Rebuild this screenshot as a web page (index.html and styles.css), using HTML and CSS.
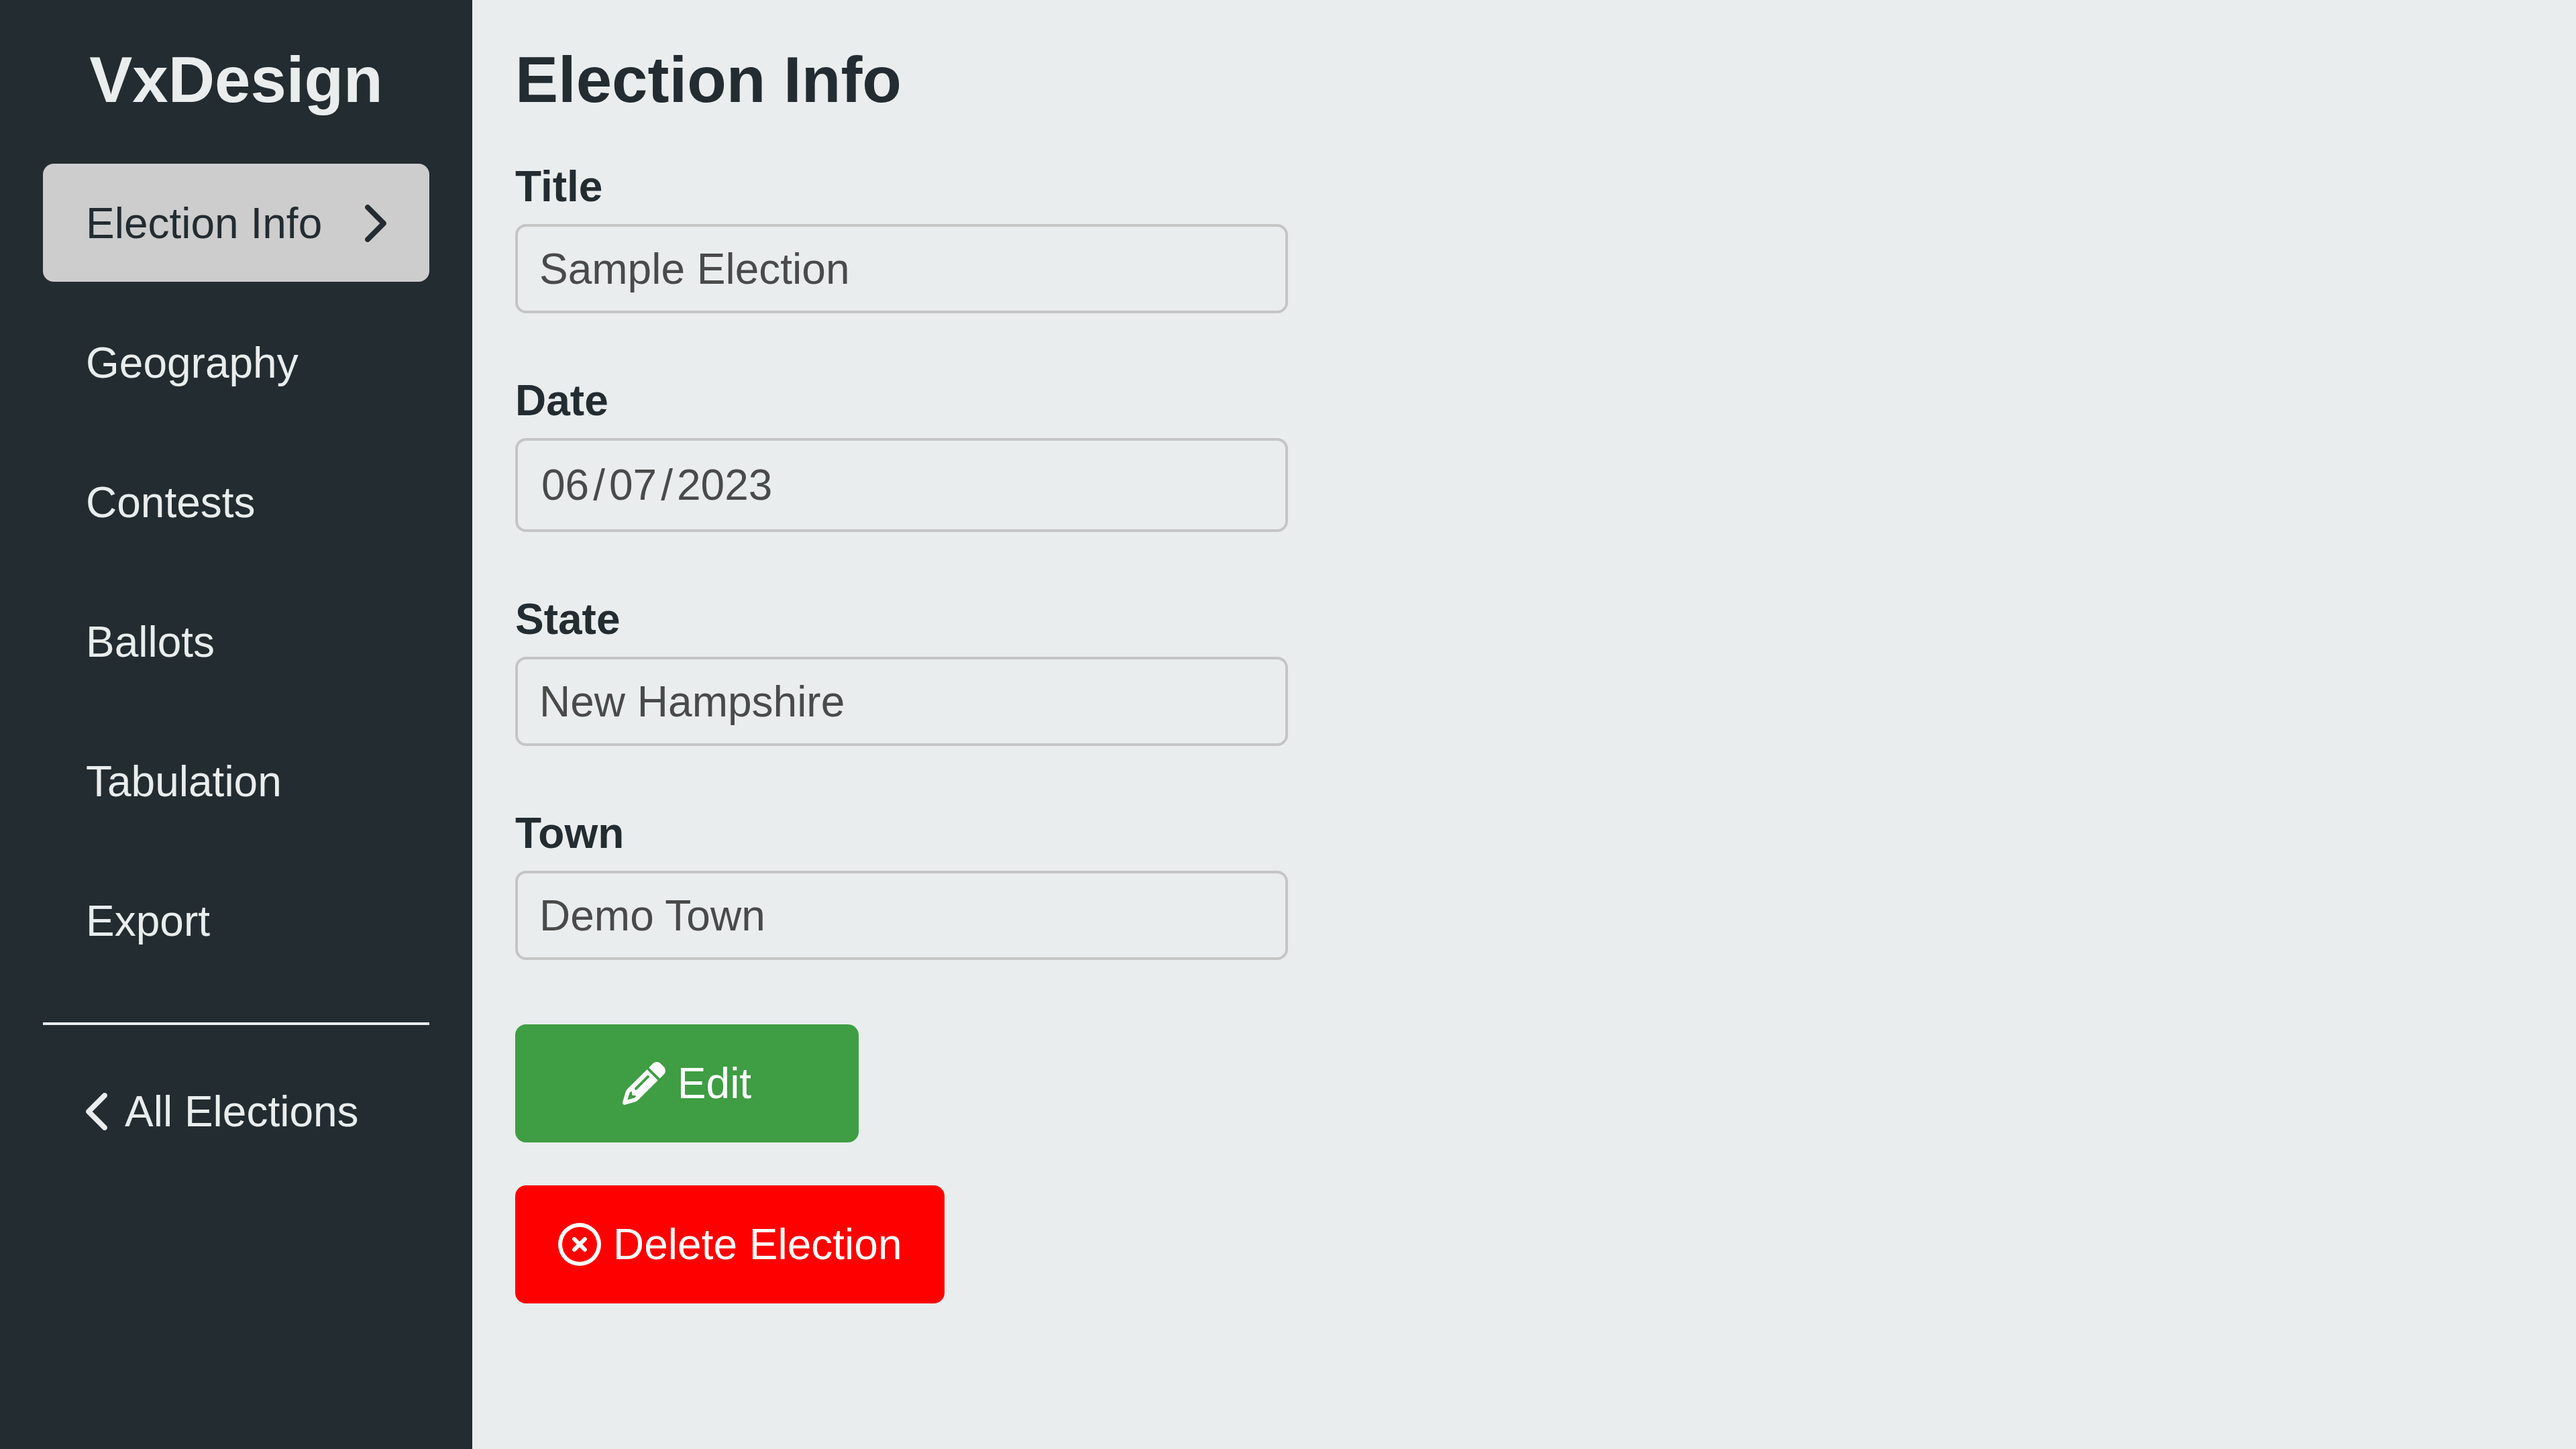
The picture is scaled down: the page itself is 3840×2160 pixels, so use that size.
FILE: index.html
```html
<!DOCTYPE html>
<html lang="en-US">
<head>
  <meta charset="utf-8">
  <meta name="viewport" content="width=device-width, initial-scale=1">
  <title>VxDesign</title>
  <link rel="stylesheet" href="styles.css">
</head>
<body>
  <div class="app">
    <aside class="sidebar">
      <div class="brand">VxDesign</div>
      <nav class="nav" aria-label="Election">
        <a class="nav-link nav-link-active" href="#info" aria-current="page">Election Info
          <svg class="icon icon-narrow nav-arrow" viewBox="0 0 320 512" aria-hidden="true"><path d="M310.6 233.4c12.5 12.5 12.5 32.8 0 45.3l-192 192c-12.5 12.5-32.8 12.5-45.3 0s-12.5-32.8 0-45.3L242.7 256 73.4 86.6c-12.5-12.5-12.5-32.8 0-45.3s32.8-12.5 45.3 0l192 192z"/></svg>
        </a>
        <a class="nav-link" href="#geography">Geography</a>
        <a class="nav-link" href="#contests">Contests</a>
        <a class="nav-link" href="#ballots">Ballots</a>
        <a class="nav-link" href="#tabulation">Tabulation</a>
        <a class="nav-link" href="#export">Export</a>
      </nav>
      <hr class="divider">
      <a class="nav-link" href="#elections">
        <svg class="icon icon-narrow" viewBox="0 0 320 512" aria-hidden="true"><path d="M9.4 233.4c-12.5 12.5-12.5 32.8 0 45.3l192 192c12.5 12.5 32.8 12.5 45.3 0s12.5-32.8 0-45.3L77.3 256 246.6 86.6c12.5-12.5 12.5-32.8 0-45.3s-32.8-12.5-45.3 0l-192 192z"/></svg>
        All Elections
      </a>
    </aside>
    <main class="content">
      <h1 class="page-title">Election Info</h1>
      <form class="form">
        <div class="field">
          <label class="label" for="title">Title</label>
          <input class="input" id="title" type="text" value="Sample Election" disabled>
        </div>
        <div class="field">
          <label class="label" for="date">Date</label>
          <input class="input input-date" id="date" type="date" value="2023-06-07" disabled>
        </div>
        <div class="field">
          <label class="label" for="state">State</label>
          <input class="input" id="state" type="text" value="New Hampshire" disabled>
        </div>
        <div class="field">
          <label class="label" for="town">Town</label>
          <input class="input" id="town" type="text" value="Demo Town" disabled>
        </div>
        <div class="actions">
          <button class="button button-primary" type="button">
            <svg class="icon" viewBox="0 0 512 512" aria-hidden="true"><path d="M410.3 231l11.3-11.3-33.9-33.9-62.1-62.1L291.7 89.8l-11.3 11.3-22.6 22.6L58.6 322.9c-10.4 10.4-18 23.3-22.2 37.4L1 480.7c-2.5 8.4-.2 17.5 6.1 23.7s15.3 8.5 23.7 6.1l120.3-35.4c14.1-4.2 27-11.8 37.4-22.2L387.7 253.7 410.3 231zM160 399.4l-9.1 22.7c-4 3.1-8.5 5.4-13.3 6.9L59.4 452l23-78.1c1.4-4.9 3.8-9.4 6.9-13.3l22.7-9.1v32c0 8.8 7.2 16 16 16h32zM362.7 18.7L348.3 33.2 325.7 55.8 314.3 67.1l33.9 33.9 62.1 62.1 33.9 33.9 11.3-11.3 22.6-22.6 14.5-14.5c25-25 25-65.5 0-90.5L453.3 18.7c-25-25-65.5-25-90.5 0zm-47.4 168l-144 144c-6.2 6.2-16.4 6.2-22.6 0s-6.2-16.4 0-22.6l144-144c6.2-6.2 16.4-6.2 22.6 0s6.2 16.4 0 22.6z"/></svg>
            Edit
          </button>
          <button class="button button-danger" type="button">
            <svg class="icon" viewBox="0 0 512 512" aria-hidden="true"><path d="M256 48a208 208 0 1 1 0 416 208 208 0 1 1 0-416zm0 464A256 256 0 1 0 256 0a256 256 0 1 0 0 512zM175 175c-9.4 9.4-9.4 24.6 0 33.9l47 47-47 47c-9.4 9.4-9.4 24.6 0 33.9s24.6 9.4 33.9 0l47-47 47 47c9.4 9.4 24.6 9.4 33.9 0s9.4-24.6 0-33.9l-47-47 47-47c9.4-9.4 9.4-24.6 0-33.9s-24.6-9.4-33.9 0l-47 47-47-47c-9.4-9.4-24.6-9.4-33.9 0z"/></svg>
            Delete Election
          </button>
        </div>
      </form>
    </main>
  </div>
</body>
</html>
```
FILE: styles.css
```css
:root {
  --dark: #232c31;
  --light: #e9eded;
  --selected: #cdcdcd;
  --border: #c5c5c5;
  --muted: #4a4a4a;
  --primary: #3f9d43;
  --danger: #ff0000;
}

* {
  box-sizing: border-box;
}

body {
  margin: 0;
  background: var(--light);
  color: var(--dark);
  font-family: "Liberation Sans", Arial, sans-serif;
  font-size: 64px;
  line-height: 72px;
}

.app {
  display: flex;
  min-height: 100vh;
}

.sidebar {
  flex: 0 0 704px;
  padding: 64px;
  background: var(--dark);
  color: var(--light);
}

.brand,
.page-title {
  margin: 0 0 70px;
  font-size: 96px;
  font-weight: bold;
  line-height: 110px;
}

.brand {
  text-align: center;
}

.nav {
  display: flex;
  flex-direction: column;
  gap: 32px;
}

.nav-link {
  display: flex;
  align-items: center;
  gap: 18px;
  padding: 53px 64px 51px;
  border-radius: 16px;
  color: inherit;
  text-decoration: none;
  white-space: nowrap;
}

.nav-link-active {
  background: var(--selected);
  color: var(--dark);
}

.nav-arrow {
  margin-left: auto;
}

.icon {
  flex: none;
  width: 64px;
  height: 64px;
  fill: currentColor;
}

.icon-narrow {
  width: 40px;
}

.divider {
  height: 4px;
  margin: 64px 0 40px;
  border: 0;
  background: var(--light);
}

.content {
  flex: 1;
  min-width: 0;
  padding: 64px;
}

.form {
  display: flex;
  flex-direction: column;
  gap: 96px;
  max-width: 1152px;
}

.field {
  display: flex;
  flex-direction: column;
  gap: 22px;
}

.label {
  font-weight: bold;
  line-height: 68px;
}

.input {
  width: 100%;
  height: 133px;
  margin: 0;
  padding: 0 32px;
  border: 4px solid var(--border);
  border-radius: 16px;
  background: transparent;
  color: var(--muted);
  font: inherit;
}

.input-date {
  height: 140px;
}

.input-date::-webkit-datetime-edit {
  padding: 0;
}

.input-date::-webkit-datetime-edit-month-field,
.input-date::-webkit-datetime-edit-day-field,
.input-date::-webkit-datetime-edit-year-field {
  padding: 0 3px;
  color: var(--muted);
}

.input-date::-webkit-datetime-edit-text {
  padding: 0 3px;
  color: var(--muted);
}

.input-date::-webkit-calendar-picker-indicator {
  display: none;
}

.actions {
  display: flex;
  flex-direction: column;
  align-items: flex-start;
  gap: 64px;
}

.button {
  display: flex;
  align-items: center;
  justify-content: center;
  gap: 18px;
  min-width: 512px;
  padding: 52px 64px;
  border: 0;
  border-radius: 16px;
  color: #ffffff;
  font: inherit;
  white-space: nowrap;
}

.button-primary {
  background: var(--primary);
}

.button-danger {
  background: var(--danger);
}
```
